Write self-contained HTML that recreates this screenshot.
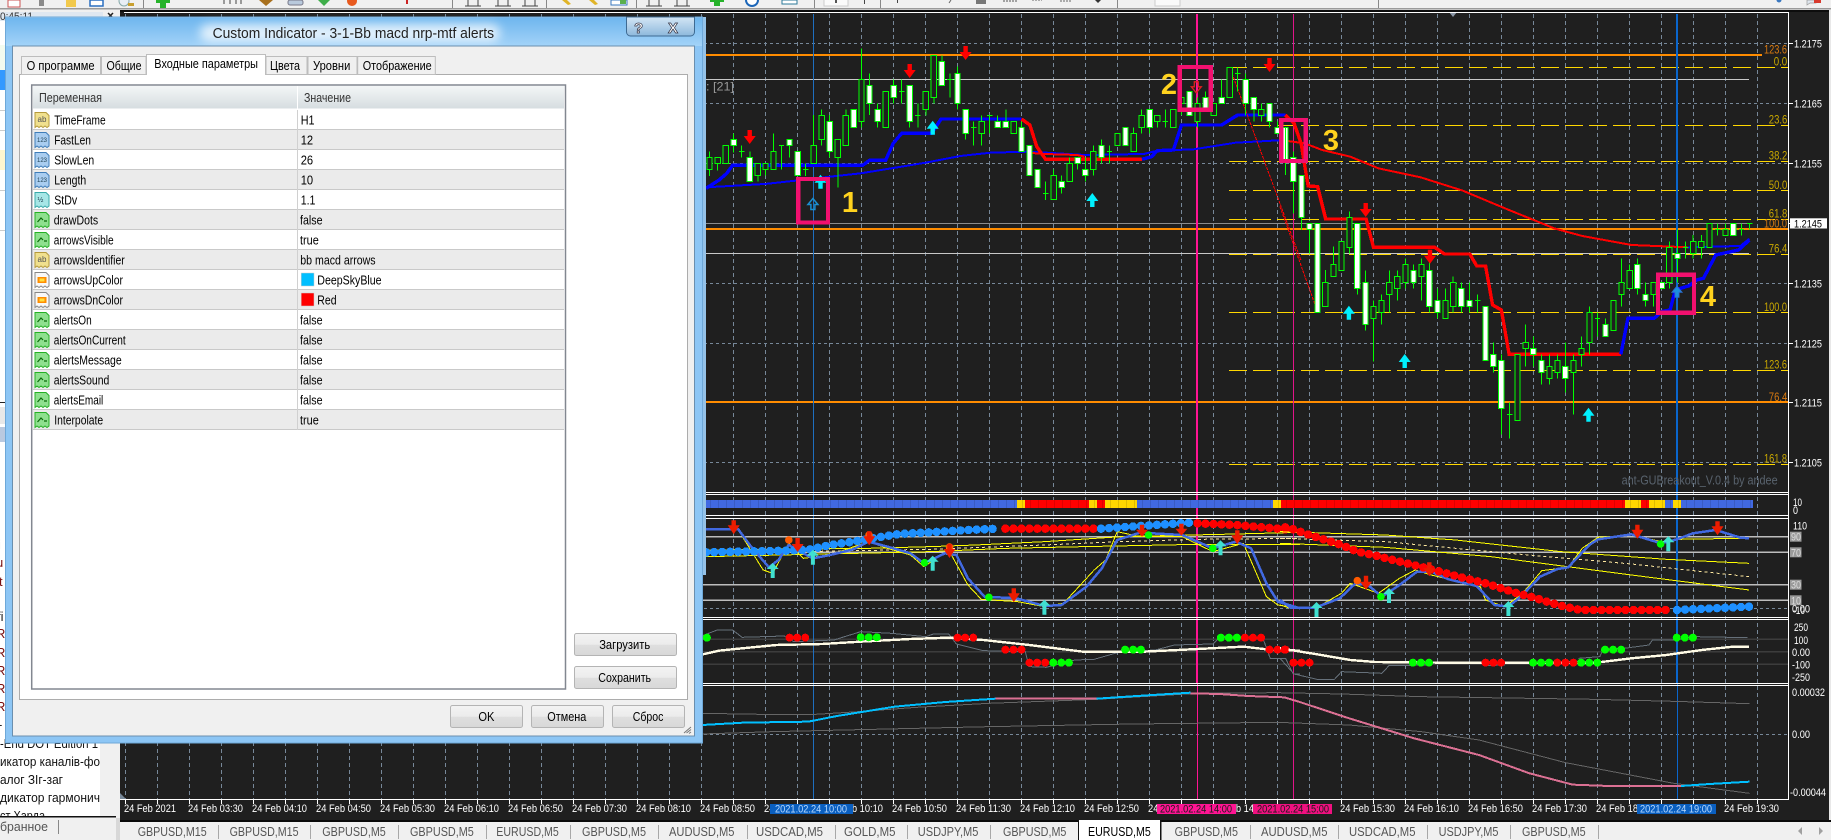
<!DOCTYPE html>
<html><head><meta charset="utf-8"><title>Custom Indicator</title>
<style>
html,body{margin:0;padding:0;background:#f0f0f0;overflow:hidden}
svg{display:block}
text{font-family:"Liberation Sans",sans-serif;white-space:pre}
path{vector-effect:non-scaling-stroke}
.n{fill:none}
.n path,path.n{shape-rendering:crispEdges}
.c path{shape-rendering:crispEdges}
.ax text{fill:#fff;font-size:11px}
.t text{fill:#000;font-size:13px}
.tb text{fill:#555;font-size:13px}
</style></head><body>
<svg xmlns="http://www.w3.org/2000/svg" width="1831" height="840" viewBox="0 0 1831 840">
<defs>
<pattern id="vg" x="125" y="14" width="32" height="7" patternUnits="userSpaceOnUse"><rect width="1" height="4" fill="#778899"/></pattern>
<pattern id="tk" x="125" y="799" width="32" height="5" patternUnits="userSpaceOnUse"><rect width="1" height="5" fill="#fff"/></pattern>
<linearGradient id="tit" x1="0" y1="0" x2="0" y2="1"><stop offset="0" stop-color="#6fb6ee"/><stop offset="1" stop-color="#a3d3f8"/></linearGradient>
<linearGradient id="hdr" x1="0" y1="0" x2="0" y2="1"><stop offset="0" stop-color="#f3f6f7"/><stop offset="1" stop-color="#d6dde0"/></linearGradient>
<linearGradient id="btn" x1="0" y1="0" x2="0" y2="1"><stop offset="0" stop-color="#f3f3f3"/><stop offset=".5" stop-color="#ececec"/><stop offset=".52" stop-color="#dfdfdf"/><stop offset="1" stop-color="#d8d8d8"/></linearGradient>
<linearGradient id="cb" x1="0" y1="0" x2="0" y2="1"><stop offset="0" stop-color="#d4e6f5"/><stop offset="1" stop-color="#8db8dc"/></linearGradient>
<filter id="bl" x="-20%" y="-60%" width="140%" height="220%"><feGaussianBlur stdDeviation="5"/></filter>
</defs>

<!-- window background -->
<rect width="1831" height="840" fill="#f0f0f0"/>
<rect x="0" y="8" width="1831" height="1.5" fill="#9a9a9a"/>

<!-- toolbar -->
<g>
<rect x="8" y="0" width="12" height="7" fill="#fff" stroke="#c55" stroke-width="1"/>
<rect x="39" y="0" width="5" height="6" fill="#8a8a8a"/>
<rect x="66" y="0" width="10" height="7" fill="#f2c94c"/>
<rect x="90" y="0" width="13" height="6" fill="#fff" stroke="#2a6fc0" stroke-width="1.5"/>
<circle cx="124" cy="1" r="5" fill="#e8eef5" stroke="#8aa" stroke-width="1"/><rect x="128" y="3" width="6" height="3" fill="#c9a030"/>
<rect x="143" y="0" width="1" height="8" fill="#888"/>
<rect x="160" y="0" width="6" height="8" fill="#27b32b"/><rect x="156" y="0" width="14" height="3" fill="#27b32b"/>
<path d="M224 0v4M230 0v4M236 0v4M241 0v4" stroke="#444" fill="none"/>
<path d="M259 0h14l-7 6z" fill="#a8701e"/>
<rect x="288" y="0" width="15" height="5" rx="2" fill="#b9c9dc" stroke="#778" stroke-width="1"/>
<path d="M318 0h12l-6 6z" fill="#3fae4a"/>
<circle cx="352" cy="1" r="5" fill="#e85a1e"/>
<rect x="406" y="0" width="2" height="4" fill="#c22"/>
<rect x="452" y="0" width="1" height="8" fill="#888"/>
<path d="M465 6h16M468 0v6M478 0v6M495 6h16M498 0v6M508 0v6M522 6h16M525 0v6M535 0v6" stroke="#444" fill="none"/>
<rect x="546" y="0" width="1" height="8" fill="#888"/>
<path d="M562 0l6 5 3-1-4-4zM589 0l6 5 3-1-4-4z" fill="#e0b428"/>
<rect x="611" y="0" width="16" height="5" fill="#fff" stroke="#3a78c0" stroke-width="1"/><rect x="620" y="0" width="6" height="4" fill="#5bb04f"/>
<rect x="636" y="0" width="1" height="8" fill="#888"/>
<path d="M646 6h16M649 0v6M659 0v6M674 6h16M677 0v6M687 0v6" stroke="#444" fill="none"/>
<rect x="714" y="0" width="6" height="6" fill="#27b32b"/><rect x="710" y="0" width="14" height="2" fill="#27b32b"/>
<circle cx="752" cy="0" r="6" fill="#fff" stroke="#1c66b8" stroke-width="2"/>
<rect x="782" y="0" width="15" height="4" fill="#fff" stroke="#2d7a9a" stroke-width="1"/>
<rect x="814" y="0" width="1" height="8" fill="#888"/>
<rect x="824" y="-1" width="24" height="7" fill="#fbfbfb" stroke="#ccc"/>
<rect x="835" y="0" width="2" height="3" fill="#555"/><rect x="864" y="0" width="1" height="4" fill="#444"/>
<rect x="880" y="0" width="1" height="8" fill="#888"/>
<rect x="897" y="0" width="1" height="3" fill="#444"/>
<path d="M949 3l2-3" stroke="#666" fill="none"/>
<rect x="976" y="0" width="10" height="4" fill="#777"/>
<path d="M1003 1h14" stroke="#555" stroke-dasharray="2 1" fill="none"/>
<path d="M1032 0h10M1060 1h12" stroke="#666" stroke-dasharray="2 1" fill="none"/>
<path d="M1095 0h6l-3 3z" fill="#333"/>
<rect x="1117" y="0" width="1" height="8" fill="#888"/>
<rect x="1155" y="-1" width="25" height="7" fill="#fafafa" stroke="#ccc"/>
<rect x="1378" y="0" width="1" height="8" fill="#888"/>
<circle cx="1779" cy="0" r="2.5" fill="#3a78c0"/>
<path d="M1807 0h9v3h-6l-3 2z" fill="#dfe6ee" stroke="#999" stroke-width=".7"/><rect x="1814" y="0" width="7" height="3" fill="#d83a2e"/>
</g>

<!-- chart background -->
<rect x="120" y="10" width="1711" height="811" fill="#1f1f1f"/>
<rect x="120" y="10" width="1711" height="2" fill="#0d0d0d"/>
<rect x="1829" y="10" width="2" height="811" fill="#e8e8e8"/>
<rect x="120" y="14" width="1640" height="785" fill="url(#vg)"/>
<rect x="125" y="799" width="1640" height="5" fill="url(#tk)"/>

<!-- horizontal grid -->
<path class="n" stroke="#778899" stroke-dasharray="3 3" d="M122 43.5H1788M122 103.5H1788M122 163.5H1788M122 283.5H1788M122 343.5H1788M122 402.5H1788M122 462.5H1788M122 608.5H1788M122 734.5H1788"/>
<!-- fib gold dashes -->
<path class="n" stroke="#ffd700" stroke-width="1.4" stroke-dasharray="18 6" d="M1229 67.5H1788M1229 125.5H1788M1229 161.5H1788M1229 190.5H1788M1229 219.5H1788M1229 254.5H1788M1229 312.5H1788M1229 370.5H1788M1229 464.5H1788"/>
<!-- solid levels -->
<path class="n" stroke="#c8c8c8" stroke-width="1.2" d="M120 79.5H1749M120 253.5H1749"/>
<path class="n" stroke="#8c8c8c" stroke-width="1.2" d="M120 223.5H1749"/>
<path class="n" stroke="#ff8c00" stroke-width="2" d="M120 55H1762M120 229H1788M120 402H1788"/>
<!-- panel 3 & 4 levels -->
<path class="n" stroke="#bdbdbd" stroke-width="1.2" d="M702 536.7H1788M702 552.3H1788M702 584.7H1788M702 600.3H1788"/>
<path class="n" stroke="#3c3c3c" stroke-width="1.2" d="M702 639.3H1788M702 651.7H1788M702 664.3H1788"/>

<!-- vertical markers -->
<rect x="813" y="14" width="1" height="785" fill="#1e6fc0"/>
<rect x="1196" y="14" width="2" height="669" fill="#ff1493"/>
<rect x="1197" y="683" width="1" height="116" fill="#ff1493"/>
<rect x="1293" y="14" width="1" height="785" fill="#e0148a"/>
<rect x="1676" y="14" width="2" height="669" fill="#0a66cc"/>
<rect x="1677" y="683" width="1" height="116" fill="#0a66cc"/>

<!-- supertrend and MA, left part -->
<g transform="translate(700,0) scale(.3827,.3333)" class="n">
<path stroke="#00f" stroke-width="2" d="M16 562L170 552 250 542 340 530 420 520 500 505 590 488 680 468 760 458 860 455 1005 465 1160 462 1195 452 1290 448 1400 428 1530 420"/>
<path stroke="#f00" stroke-width="2" d="M855 458L900 462 985 465 1005 470"/>
<path stroke="#00f" stroke-width="3.4" d="M16 565L50 540 70 520 85 496H425L443 481H485L505 430 527 400H605L630 357H840"/>
<path stroke="#f00" stroke-width="3.4" d="M840 357L862 375 880 440 903 478H1155"/>
<path stroke="#00f" stroke-width="3.4" d="M1155 478L1180 470 1195 452 1237 450 1258 375H1363L1405 345H1530"/>
<path stroke="#f00" stroke-width="1" stroke-dasharray="3 1" d="M1390 220L1570 780"/>
</g>
<g transform="translate(1280,0) scale(.3514,.3333)" class="n">
<path stroke="#f00" stroke-width="1" stroke-dasharray="3 1" d="M0 620L100 915"/>
<path stroke="#f00" stroke-width="2" d="M0 420L70 430 120 450 200 470 280 505 400 532 520 572 640 625 780 685 860 708 1000 735 1160 742"/>
<path stroke="#00f" stroke-width="2" d="M1160 742L1310 738 1336 716"/>
<path stroke="#f00" stroke-width="3.4" d="M15 345L40 370 60 430 80 558 107 560 130 657H245L266 742H440L468 762H540L560 798H585L605 915 630 930 652 1063H970"/>
<path stroke="#00f" stroke-width="3.4" d="M970 1063L990 955H1065L1085 935 1110 930 1125 870 1165 857 1185 840 1205 835 1240 765 1305 750 1336 720"/>
</g>

<!-- candles left -->
<g transform="translate(700,0) scale(.3827,.3333)" class="c">
<path class="n" stroke="#0f0" d="M25 455V528M46 472V512M67 436V490M88 400V458M109 436V472M130 455V545M151 490V545M171 490V526M192 400V508M213 436V508M234 418V472M255 454V528M276 490V528M297 345V490M318 328V436M339 345V472M360 418V562M381 328V436M402 328V382M422 145V382M443 220V345M464 310V382M485 274V382M506 238V310M527 238V310M548 256V382M569 310V382M590 274V346M611 167V310M632 167V256M653 220V292M673 200V328M694 328V418M715 364V436M736 346V436M757 346V400M778 346V382M799 328V382M820 364V400M840 364V456M861 436V526M882 508V562M903 544V600M924 508V598M945 526V580M966 472V544M987 472V508M1007 472V545M1028 436V526M1049 418V490M1070 436V490M1091 400V436M1112 382V436M1133 382V454M1154 328V400M1175 328V400M1195 346V382M1216 328V382M1237 328V382M1258 292V345M1279 274V346M1300 292V382M1321 274V328M1342 310V346M1363 238V310M1384 202V292M1405 202V274M1426 220V346M1447 292V364M1467 310V364M1488 310V382M1509 364V400M1530 382V510"/>
<path class="n" stroke="#0f0" d="M109 454m-7 0h14M213 436m-7 0h14M276 508m-7 0h14M527 274m-7 0h14M569 346m-7 0h14M653 238m-7 0h14M715 382m-7 0h14M757 346m-7 0h14M903 580m-7 0h14M1070 454m-7 0h14M1216 364m-7 0h14M1405 220m-7 0h14"/>
<path fill="#1f1f1f" stroke="#0f0" d="M25 472m-7 0h14V508h-14zM46 472m-7 0h14V490h-14zM67 436m-7 0h14V490h-14zM151 490m-7 0h14V526h-14zM171 490m-7 0h14V508h-14zM192 454m-7 0h14V508h-14zM297 436m-7 0h14V490h-14zM318 346m-7 0h14V418h-14zM360 418m-7 0h14V472h-14zM381 346m-7 0h14V436h-14zM422 238m-7 0h14V364h-14zM485 274m-7 0h14V382h-14zM590 274m-7 0h14V328h-14zM611 167m-7 0h14V292h-14zM736 364m-7 0h14V400h-14zM820 364m-7 0h14V400h-14zM924 526m-7 0h14V598h-14zM966 490m-7 0h14V544h-14zM1028 454m-7 0h14V508h-14zM1091 400m-7 0h14V436h-14zM1133 400m-7 0h14V454h-14zM1154 346m-7 0h14V382h-14zM1195 346m-7 0h14V364h-14zM1237 328m-7 0h14V382h-14zM1258 292m-7 0h14V310h-14zM1300 310m-7 0h14V364h-14zM1342 310m-7 0h14V346h-14zM1384 202m-7 0h14V292h-14zM1467 328m-7 0h14V346h-14z"/>
<path fill="#fff" stroke="#0f0" d="M88 418m-7 0h14V436h-14zM130 472m-7 0h14V544h-14zM234 418m-7 0h14V436h-14zM255 454m-7 0h14V526h-14zM339 364m-7 0h14V454h-14zM402 328m-7 0h14V382h-14zM443 256m-7 0h14V310h-14zM464 328m-7 0h14V364h-14zM506 256m-7 0h14V292h-14zM548 256m-7 0h14V364h-14zM632 184m-7 0h14V256h-14zM673 220m-7 0h14V310h-14zM694 328m-7 0h14V400h-14zM778 364m-7 0h14V382h-14zM799 364m-7 0h14V382h-14zM840 382m-7 0h14V454h-14zM861 436m-7 0h14V526h-14zM882 508m-7 0h14V562h-14zM945 544m-7 0h14V562h-14zM987 472m-7 0h14V490h-14zM1007 508m-7 0h14V526h-14zM1049 436m-7 0h14V472h-14zM1112 382m-7 0h14V436h-14zM1175 328m-7 0h14V382h-14zM1279 274m-7 0h14V346h-14zM1321 292m-7 0h14V328h-14zM1363 292m-7 0h14V310h-14zM1426 238m-7 0h14V310h-14zM1447 292m-7 0h14V328h-14zM1488 310m-7 0h14V364h-14zM1509 382m-7 0h14V400h-14zM1530 382m-7 0h14V482h-14z"/>
</g>
<!-- candles right -->
<g transform="translate(1280,0) scale(.3514,.3333)" class="c">
<path class="n" stroke="#0f0" d="M15 382V525M38 454V640M61 526V690M84 670V760M107 670V937M129 810V919M152 740V830M175 724V811M198 634V760M220 670V884M243 811V991M266 901V1085M289 883V973M311 811V937M334 811V901M357 775V865M380 793V865M403 775V901M425 780V937M448 865V955M471 865V955M493 829V937M516 847V937M539 847V937M562 883V937M585 919V1081M607 1027V1117M630 1063V1303M653 1207V1315M676 1063V1261M699 973V1099M721 1009V1099M744 1063V1153M767 1063V1153M790 1063V1135M812 1027V1177M835 1063V1243M858 1009V1099M881 919V1063M903 937V1009M926 955V1009M949 901V991M972 775V919M995 793V865M1017 775V883M1040 847V919M1063 847V919M1086 847V865M1108 724V865M1131 688V847M1154 724V775M1176 705V775M1199 705V775M1222 670V742M1245 670V706M1268 670V706M1290 670V706M1313 670V706M1336 670V688"/>
<path class="n" stroke="#0f0" d="M562 901m-7 0h15M653 1243m-7 0h15M903 955m-7 0h15M1154 742m-7 0h15M1245 688m-7 0h15M1313 688m-7 0h15M1336 670m-7 0h15"/>
<path fill="#1f1f1f" stroke="#0f0" d="M129 847m-7.500 0h15V919h-15zM152 793m-7.500 0h15V829h-15zM175 725m-7.500 0h15V811h-15zM198 652m-7.500 0h15V742h-15zM266 919m-7.500 0h15V955h-15zM289 901m-7.500 0h15V937h-15zM311 847m-7.500 0h15V883h-15zM334 829m-7.500 0h15V865h-15zM357 793m-7.500 0h15V847h-15zM403 793m-7.500 0h15V829h-15zM471 901m-7.500 0h15V955h-15zM493 847m-7.500 0h15V919h-15zM676 1063m-7.500 0h15V1261h-15zM699 1027m-7.500 0h15V1045h-15zM767 1099m-7.500 0h15V1135h-15zM790 1081m-7.500 0h15V1117h-15zM835 1081m-7.500 0h15V1117h-15zM858 1045m-7.500 0h15V1063h-15zM881 937m-7.500 0h15V1027h-15zM949 901m-7.500 0h15V991h-15zM972 847m-7.500 0h15V883h-15zM995 811m-7.500 0h15V865h-15zM1063 847m-7.500 0h15V883h-15zM1108 742m-7.500 0h15V847h-15zM1176 724m-7.500 0h15V760h-15zM1199 724m-7.500 0h15V742h-15zM1222 670m-7.500 0h15V742h-15zM1268 688m-7.500 0h15V706h-15z"/>
<path fill="#fff" stroke="#0f0" d="M38 472m-7.500 0h15V544h-15zM61 526m-7.500 0h15V652h-15zM84 670m-7.500 0h15V688h-15zM107 670m-7.500 0h15V937h-15zM220 670m-7.500 0h15V865h-15zM243 847m-7.500 0h15V973h-15zM380 811m-7.500 0h15V847h-15zM425 811m-7.500 0h15V919h-15zM448 901m-7.500 0h15V937h-15zM516 865m-7.500 0h15V919h-15zM539 901m-7.500 0h15V919h-15zM585 919m-7.500 0h15V1081h-15zM607 1063m-7.500 0h15V1099h-15zM630 1081m-7.500 0h15V1225h-15zM721 1045m-7.500 0h15V1063h-15zM744 1081m-7.500 0h15V1117h-15zM812 1099m-7.500 0h15V1135h-15zM926 973m-7.500 0h15V1009h-15zM1017 793m-7.500 0h15V865h-15zM1040 883m-7.500 0h15V901h-15zM1086 847m-7.500 0h15V865h-15zM1131 760m-7.500 0h15V775h-15zM1290 670m-7.500 0h15V706h-15z"/>
</g>

<!-- arrows main -->
<g fill="#f00">
<path transform="translate(749.700,137)" d="M-2.200-7H2.200V-1H6L0 7-6-1H-2.200Z"/>
<path transform="translate(909.700,71)" d="M-2.200-7H2.200V-1H6L0 7-6-1H-2.200Z"/>
<path transform="translate(965.600,53)" d="M-2.200-7H2.200V-1H6L0 7-6-1H-2.200Z"/>
<path transform="translate(1269.500,65)" d="M-2.200-7H2.200V-1H6L0 7-6-1H-2.200Z"/>
<path transform="translate(1365.700,210)" d="M-2.200-7H2.200V-1H6L0 7-6-1H-2.200Z"/>
<path transform="translate(1430,256.700)" d="M-2.200-7H2.200V-1H6L0 7-6-1H-2.200Z"/>
</g>
<g fill="#00f0ff">
<path transform="translate(820.500,181.700)" d="M0-7L6 1H2.200V7H-2.200V1H-6Z"/>
<path transform="translate(932.700,127.700)" d="M0-7L6 1H2.200V7H-2.200V1H-6Z"/>
<path transform="translate(1092.300,200)" d="M0-7L6 1H2.200V7H-2.200V1H-6Z"/>
<path transform="translate(1348.900,312.700)" d="M0-7L6 1H2.200V7H-2.200V1H-6Z"/>
<path transform="translate(1404.700,361)" d="M0-7L6 1H2.200V7H-2.200V1H-6Z"/>
<path transform="translate(1588.500,414.700)" d="M0-7L6 1H2.200V7H-2.200V1H-6Z"/>
</g>
<path transform="translate(812.900,204)" fill="none" stroke="#1a8fd0" stroke-width="1.500" d="M0-5.500L5 0.500H2V5.500H-2V.5H-5Z"/>
<path transform="translate(1196.300,87.300)" fill="none" stroke="#e02020" stroke-width="1.300" d="M-2-5.500H2V-.5H5L0 5.500-5-.5H-2Z"/>
<path transform="translate(1677,291.700)" fill="#1a8fe0" stroke="#2a6fd0" d="M0-5.500L5 0.500H2V5.500H-2V.5H-5Z"/>

<!-- pink boxes -->
<g fill="none" stroke="#f2106f" stroke-width="4.400" shape-rendering="crispEdges">
<rect x="798.400" y="179" width="29.600" height="43.500"/>
<rect x="1179.600" y="67" width="31.200" height="42.600"/>
<rect x="1281.200" y="120" width="24.400" height="41"/>
<rect x="1658" y="274.700" width="36" height="38"/>
</g>
<g fill="#ffd21e" font-size="29" font-weight="bold" text-anchor="middle" style="font-family:'Liberation Sans',sans-serif">
<text x="850" y="212">1</text><text x="1169" y="94">2</text><text x="1331" y="150">3</text><text x="1708" y="306">4</text>
</g>
<text x="706" y="90.500" font-size="12" fill="#9a9a9a" textLength="28" lengthAdjust="spacingAndGlyphs">: [21]</text>
<text x="1621.600" y="484.500" font-size="13" fill="#59636e" textLength="156" lengthAdjust="spacingAndGlyphs">ant-GUBreakout_V.0.4 by andee</text>
<path d="M1449 12h8l-4 5z" fill="#8a96a6"/>
<path d="M120 793v6h6z" fill="#778899"/>

<!-- colour strip -->
<rect x="702" y="500" width="315" height="8" fill="#4169e1"/>
<rect x="1017" y="500" width="8" height="8" fill="#ffd700"/>
<rect x="1025" y="500" width="64" height="8" fill="#f00"/>
<rect x="1089" y="500" width="8" height="8" fill="#ffd700"/>
<rect x="1097" y="500" width="8" height="8" fill="#f00"/>
<rect x="1105" y="500" width="32" height="8" fill="#ffd700"/>
<rect x="1137" y="500" width="136" height="8" fill="#4169e1"/>
<rect x="1273" y="500" width="8" height="8" fill="#ffd700"/>
<rect x="1281" y="500" width="344" height="8" fill="#f00"/>
<rect x="1625" y="500" width="16" height="8" fill="#ffd700"/>
<rect x="1641" y="500" width="8" height="8" fill="#f00"/>
<rect x="1649" y="500" width="16" height="8" fill="#ffd700"/>
<rect x="1665" y="500" width="8" height="8" fill="#4169e1"/>
<rect x="1673" y="500" width="8" height="8" fill="#ffd700"/>
<rect x="1681" y="500" width="72" height="8" fill="#4169e1"/>
<path class="n" stroke="#000" stroke-opacity=".12" stroke-width="8" stroke-dasharray="1 7" d="M702 504H1753"/>

<!-- panel 3 lines left -->
<g transform="translate(700,490) scale(.3827,.3333)" class="n">
<path stroke="#ffff00" d="M16 180L440 175 600 170 720 165 900 155 1100 140 1400 132 1568 127"/>
<path stroke="#ffff00" d="M16 200L600 185 800 175 1000 170 1300 163 1568 163"/>
<path stroke="#ffe9a0" stroke-dasharray="3 3" d="M16 190L600 178 900 165 1100 155 1300 148 1568 145"/>
<path stroke="#ffff00" d="M16 120H100L165 240 190 250 232 160 270 205 340 195 440 155 490 175 550 195 585 230 650 180 700 285 735 328 830 335 900 350 950 340 990 290 1030 240 1060 210 1090 125 1150 140 1260 140 1340 185 1420 160 1480 320 1510 345 1568 355"/>
<path stroke="#4169e1" stroke-width="2.500" d="M16 118H100L130 165 180 232 205 210 232 165 270 190 295 205 340 195 400 178 440 155 490 170 550 190 585 220 640 190 670 195 700 265 745 322 820 323 900 348 945 345 1010 290 1050 235 1090 150 1150 128 1260 135 1340 175 1400 155 1440 175 1480 280 1510 335 1568 355"/>
<path stroke="#1e90ff" stroke-width="8.500" stroke-linecap="round" stroke-dasharray="0 8" d="M16 187L230 182 290 178 340 165 400 155 460 143 520 132 600 127 700 120 780 116"/>
<path stroke="#f00" stroke-width="8.500" stroke-linecap="round" stroke-dasharray="0 8" d="M798 116H1040"/>
<path stroke="#1e90ff" stroke-width="8.500" stroke-linecap="round" stroke-dasharray="0 8" d="M1048 116L1150 108 1280 98"/>
<path stroke="#f00" stroke-width="8.500" stroke-linecap="round" stroke-dasharray="0 8" d="M1300 100L1400 105 1500 115 1550 120"/>
</g>
<g transform="translate(1280,490) scale(.3514,.3333)" class="n">
<path stroke="#ffff00" d="M0 125L300 135 500 150 800 185 1100 208 1335 220"/>
<path stroke="#ffff00" d="M0 160L300 172 600 200 1000 255 1335 300"/>
<path stroke="#ffe9a0" stroke-dasharray="3 3" d="M0 145L300 155 600 185 1000 222 1335 260"/>
<path stroke="#ffff00" d="M0 345L30 355H100L175 310 200 280 280 310 340 265 385 240 430 255 570 290 585 330 640 350 690 310 745 242 820 232 860 175 905 142 1000 135 1085 155 1130 148 1310 145H1335"/>
<path stroke="#4169e1" stroke-width="2.500" d="M0 330L30 353H100L170 325 215 280 250 285 290 320 340 285 390 245 430 245 480 268 560 288 610 345 650 350 690 315 740 260 790 237 820 232 880 165 905 148 1000 133 1085 160 1130 148 1175 130 1240 120 1310 143 1335 145"/>
<path stroke="#f00" stroke-width="8.500" stroke-linecap="round" stroke-dasharray="0 8" d="M15 112L38 118 84 135 130 150 175 165 220 185 265 195 310 207 380 225 445 242 515 262 585 280 630 295 675 310 720 322 765 337 810 350 855 360H1105"/>
<path stroke="#1e90ff" stroke-width="8.500" stroke-linecap="round" stroke-dasharray="0 8" d="M1130 360L1335 350"/>
</g>

<!-- panel 3 markers -->
<g fill="#00ff00">
<circle cx="924.600" cy="562.700" r="3.800"/><circle cx="988.900" cy="597.300" r="3.800"/><circle cx="1148.500" cy="535" r="3.800"/><circle cx="1212.800" cy="548.300" r="3.800"/><circle cx="1380.900" cy="596.700" r="3.800"/><circle cx="1660.600" cy="544" r="3.800"/>
</g>
<g fill="#ff5a00">
<circle cx="788.800" cy="540" r="3.800"/><circle cx="869" cy="535" r="3.800"/><circle cx="949.500" cy="547" r="3.800"/><circle cx="1357.300" cy="580.700" r="3.800"/>
</g>
<g fill="#ec1c00">
<path transform="translate(733.700,527.300)" d="M-2.200-7H2.200V-2H6L0 7-6-2H-2.200Z"/>
<path transform="translate(797.600,545)" d="M-2.200-7H2.200V-1H6L0 7-6-1H-2.200Z"/>
<path transform="translate(869.200,538.300)" d="M-2.200-7H2.200V-2H6L0 7-6-2H-2.200Z"/>
<path transform="translate(949.500,551)" d="M-2.200-7H2.200V-2H6L0 7-6-2H-2.200Z"/>
<path transform="translate(1013.800,595.300)" d="M-2.200-7H2.200V-2H6L0 7-6-2H-2.200Z"/>
<path transform="translate(1142,531.700)" d="M-2.200-7H2.200V-2H6L0 5-6-2H-2.200Z"/>
<path transform="translate(1181.400,530.700)" d="M-2.200-7H2.200V-2H6L0 5-6-2H-2.200Z"/>
<path transform="translate(1237.300,537.300)" d="M-2.200-7H2.200V-2H6L0 7-6-2H-2.200Z"/>
<path transform="translate(1366,582.700)" d="M-2.200-7H2.200V-1H6L0 7-6-1H-2.200Z"/>
<path transform="translate(1429.300,569.300)" d="M-2.200-7H2.200V-1H6L0 7-6-1H-2.200Z"/>
<path transform="translate(1637.400,531.700)" d="M-2.200-7H2.200V-2H6L0 7-6-2H-2.200Z"/>
<path transform="translate(1717.500,528.300)" d="M-2.200-7H2.200V-2H6L0 7-6-2H-2.200Z"/>
</g>
<g fill="#40e0d0">
<path transform="translate(772.700,570)" d="M0-7L6-1H2V8H-2V-1H-6Z"/>
<path transform="translate(812.900,556.700)" d="M0-7L6-1H2V8H-2V-1H-6Z"/>
<path transform="translate(932.700,562.700)" d="M0-7L6-1H2V8H-2V-1H-6Z"/>
<path transform="translate(1044.400,606.700)" d="M0-7L6-1H2V8H-2V-1H-6Z"/>
<path transform="translate(1220.500,547.300)" d="M0-7L6-1H2V8H-2V-1H-6Z"/>
<path transform="translate(1316.500,609)" d="M0-7L6-1H2V8H-2V-1H-6Z"/>
<path transform="translate(1389,595)" d="M0-7L6-1H2V8H-2V-1H-6Z"/>
<path transform="translate(1508.400,608)" d="M0-7L6-1H2V8H-2V-1H-6Z"/>
<path transform="translate(1668.300,543.300)" d="M0-7L6-1H2V8H-2V-1H-6Z"/>
</g>

<!-- panel 4 -->
<g transform="translate(700,490) scale(.3827,.3333)" class="n">
<path stroke="#66707a" d="M0 440L45 420H85L110 442 220 438 245 455 350 450 420 425 500 430 590 440 610 432H650L670 462 740 482 850 485 860 530 905 532 980 510 1030 508 1100 485 1190 480 1240 465 1340 462 1360 440 1470 442 1490 505H1530L1550 552H1568"/>
<path stroke="#fffbe6" stroke-width="2.400" d="M0 495L50 482 110 475 200 465 320 462 420 455 550 447 650 443 740 450 860 465 1000 485H1160L1250 480 1420 470 1480 478 1568 482"/>
<path stroke="#00ff00" stroke-width="8" stroke-linecap="round" d="M18 443h0M420 442h0M441 442h0M462 442h0M923 518h0M944 518h0M964 518h0M1111 479h0M1132 479h0M1152 479h0M1361 443h0M1382 443h0M1403 443h0"/>
<path stroke="#f00" stroke-width="8" stroke-linecap="round" d="M234 443h0M254 443h0M275 443h0M673 443h0M693 443h0M714 443h0M798 479h0M819 479h0M840 479h0M861 518h0M881 518h0M902 518h0M1424 443h0M1445 443h0M1466 443h0M1488 479h0M1509 479h0M1530 479h0M1551 518h0"/>
</g>
<g transform="translate(1280,490) scale(.3514,.3333)" class="n">
<path stroke="#66707a" d="M0 505L40 552 105 568H155L175 545 290 550 310 527 420 525M580 527L640 525M850 505L910 500 920 478 980 475 1050 465 1060 450H1120L1180 440 1330 443"/>
<path stroke="#fffbe6" stroke-width="2.400" d="M0 475L100 492 200 510 270 516 470 518H900L1000 505 1100 495 1200 480 1290 470H1335"/>
<path stroke="#00ff00" stroke-width="8" stroke-linecap="round" d="M378 518h0M401 518h0M424 518h0M720 518h0M743 518h0M766 518h0M857 518h0M880 518h0M903 518h0M925 479h0M948 479h0M971 479h0M1129 443h0M1152 443h0M1175 443h0"/>
<path stroke="#f00" stroke-width="8" stroke-linecap="round" d="M13 479h0M38 518h0M61 518h0M84 518h0M585 518h0M607 518h0M629 518h0M789 518h0M812 518h0M835 518h0"/>
</g>

<!-- panel 5 -->
<g transform="translate(700,680) scale(.7213,.3333)" class="n">
<path stroke="#666" stroke-width="1" d="M3 100L85 103H160L220 95 300 82 400 70 550 58 690 40 800 38 890 42 1000 50 1240 58 1350 64 1455 71"/>
<path stroke="#666" stroke-width="1" d="M3 162L100 155 200 150 400 140 600 132 800 127 900 135 1000 155 1080 180 1200 248 1350 310 1455 340"/>
<path stroke="#00bfff" stroke-width="2" d="M3 135L60 128 150 125 190 108 270 80 340 66 410 56"/>
<path stroke="#db7093" stroke-width="2" d="M410 56H550"/>
<path stroke="#00bfff" stroke-width="2" d="M550 56L620 46 680 38"/>
<path stroke="#db7093" stroke-width="2" d="M680 40L720 42 760 48 810 52 830 65 900 115 990 175 1080 225 1150 280 1210 314 1260 318H1360"/>
<path stroke="#00bfff" stroke-width="2" d="M1360 318L1400 312 1455 305"/>
</g>

<!-- white separators and borders -->
<g fill="#fff">
<rect x="124" y="12" width="1665" height="1"/>
<rect x="120" y="492" width="1669" height="1"/><rect x="120" y="494" width="1669" height="1"/>
<rect x="120" y="515" width="1669" height="1"/><rect x="120" y="518" width="1669" height="1"/>
<rect x="120" y="617" width="1669" height="1"/><rect x="120" y="619" width="1669" height="1"/>
<rect x="120" y="683" width="1669" height="1"/><rect x="120" y="685" width="1669" height="1"/>
<rect x="120" y="799" width="1669" height="1"/>
<rect x="1788" y="12" width="1" height="788"/>
</g>
<path class="n" stroke="#fff" d="M1788 43.500h5M1788 103.500h5M1788 163.500h5M1788 223.500h5M1788 283.500h5M1788 343.500h5M1788 402.500h5M1788 462.500h5"/>

<!-- fib labels -->
<g font-size="11.500">
<text x="1764" y="53.500" fill="#d97a10" textLength="23" lengthAdjust="spacingAndGlyphs">123.6</text>
<text x="1773.700" y="65.500" fill="#c9a800" textLength="13.500" lengthAdjust="spacingAndGlyphs">0.0</text>
<text x="1768.800" y="123.500" fill="#c9a800" textLength="18.500" lengthAdjust="spacingAndGlyphs">23.6</text>
<text x="1768.800" y="159.500" fill="#c9a800" textLength="18.500" lengthAdjust="spacingAndGlyphs">38.2</text>
<text x="1768.800" y="189" fill="#c9a800" textLength="18.500" lengthAdjust="spacingAndGlyphs">50.0</text>
<text x="1768.800" y="217.500" fill="#c9a800" textLength="18.500" lengthAdjust="spacingAndGlyphs">61.8</text>
<text x="1764" y="227.500" fill="#d97a10" textLength="23" lengthAdjust="spacingAndGlyphs">100.0</text>
<text x="1768.800" y="252.500" fill="#c9a800" textLength="18.500" lengthAdjust="spacingAndGlyphs">76.4</text>
<text x="1764" y="311" fill="#c9a800" textLength="23" lengthAdjust="spacingAndGlyphs">100.0</text>
<text x="1764" y="368.500" fill="#c9a800" textLength="23" lengthAdjust="spacingAndGlyphs">123.6</text>
<text x="1768.800" y="401" fill="#d97a10" textLength="18.500" lengthAdjust="spacingAndGlyphs">76.4</text>
<text x="1764" y="462.500" fill="#c9a800" textLength="23" lengthAdjust="spacingAndGlyphs">161.8</text>
</g>

<!-- price axis -->
<rect x="1790" y="218.300" width="37" height="10.200" fill="#fff"/>
<rect x="1790" y="531.700" width="11.500" height="10" fill="#9a9a9a"/>
<rect x="1790" y="547.300" width="11.500" height="10" fill="#9a9a9a"/>
<rect x="1790" y="579.700" width="11.500" height="10" fill="#9a9a9a"/>
<rect x="1790" y="595.300" width="11.500" height="10" fill="#9a9a9a"/>
<g class="ax">
<text x="1794" y="47.500" textLength="28" lengthAdjust="spacingAndGlyphs">1.2175</text>
<text x="1794" y="107.500" textLength="28" lengthAdjust="spacingAndGlyphs">1.2165</text>
<text x="1794" y="167.500" textLength="28" lengthAdjust="spacingAndGlyphs">1.2155</text>
<text x="1794" y="227.500" textLength="28" lengthAdjust="spacingAndGlyphs" style="fill:#000">1.2145</text>
<text x="1794" y="287.500" textLength="28" lengthAdjust="spacingAndGlyphs">1.2135</text>
<text x="1794" y="347.500" textLength="28" lengthAdjust="spacingAndGlyphs">1.2125</text>
<text x="1794" y="406.500" textLength="28" lengthAdjust="spacingAndGlyphs">1.2115</text>
<text x="1794" y="466.500" textLength="28" lengthAdjust="spacingAndGlyphs">1.2105</text>
<text x="1793" y="506" textLength="9" lengthAdjust="spacingAndGlyphs">10</text>
<text x="1793" y="514" textLength="5" lengthAdjust="spacingAndGlyphs">0</text>
<text x="1793" y="529.500" textLength="14" lengthAdjust="spacingAndGlyphs">110</text>
<text x="1791" y="540.700" textLength="10" lengthAdjust="spacingAndGlyphs" style="fill:#ddd">90</text>
<text x="1791" y="556.300" textLength="10" lengthAdjust="spacingAndGlyphs" style="fill:#ddd">70</text>
<text x="1791" y="588.700" textLength="10" lengthAdjust="spacingAndGlyphs" style="fill:#ddd">30</text>
<text x="1791" y="604.300" textLength="10" lengthAdjust="spacingAndGlyphs" style="fill:#ddd">10</text>
<text x="1792" y="612.500" textLength="18" lengthAdjust="spacingAndGlyphs">0.00</text>
<text x="1793" y="614" textLength="12" lengthAdjust="spacingAndGlyphs">-10</text>
<text x="1794" y="631" textLength="14" lengthAdjust="spacingAndGlyphs">250</text>
<text x="1794" y="644" textLength="14" lengthAdjust="spacingAndGlyphs">100</text>
<text x="1792" y="656" textLength="18" lengthAdjust="spacingAndGlyphs">0.00</text>
<text x="1792" y="668.500" textLength="18" lengthAdjust="spacingAndGlyphs">-100</text>
<text x="1792" y="681" textLength="18" lengthAdjust="spacingAndGlyphs">-250</text>
<text x="1792" y="696" textLength="33" lengthAdjust="spacingAndGlyphs">0.00032</text>
<text x="1792" y="738" textLength="18" lengthAdjust="spacingAndGlyphs">0.00</text>
<text x="1790" y="796" textLength="36" lengthAdjust="spacingAndGlyphs">-0.00044</text>
</g>

<!-- time axis -->
<g class="ax">
<text x="124" y="812" textLength="52" lengthAdjust="spacingAndGlyphs">24 Feb 2021</text>
<text x="188" y="812" textLength="55" lengthAdjust="spacingAndGlyphs">24 Feb 03:30</text>
<text x="252" y="812" textLength="55" lengthAdjust="spacingAndGlyphs">24 Feb 04:10</text>
<text x="316" y="812" textLength="55" lengthAdjust="spacingAndGlyphs">24 Feb 04:50</text>
<text x="380" y="812" textLength="55" lengthAdjust="spacingAndGlyphs">24 Feb 05:30</text>
<text x="444" y="812" textLength="55" lengthAdjust="spacingAndGlyphs">24 Feb 06:10</text>
<text x="508" y="812" textLength="55" lengthAdjust="spacingAndGlyphs">24 Feb 06:50</text>
<text x="572" y="812" textLength="55" lengthAdjust="spacingAndGlyphs">24 Feb 07:30</text>
<text x="636" y="812" textLength="55" lengthAdjust="spacingAndGlyphs">24 Feb 08:10</text>
<text x="700" y="812" textLength="55" lengthAdjust="spacingAndGlyphs">24 Feb 08:50</text>
<text x="764" y="812" textLength="55" lengthAdjust="spacingAndGlyphs">24 Feb 09:30</text>
<text x="828" y="812" textLength="55" lengthAdjust="spacingAndGlyphs">24 Feb 10:10</text>
<text x="892" y="812" textLength="55" lengthAdjust="spacingAndGlyphs">24 Feb 10:50</text>
<text x="956" y="812" textLength="55" lengthAdjust="spacingAndGlyphs">24 Feb 11:30</text>
<text x="1020" y="812" textLength="55" lengthAdjust="spacingAndGlyphs">24 Feb 12:10</text>
<text x="1084" y="812" textLength="55" lengthAdjust="spacingAndGlyphs">24 Feb 12:50</text>
<text x="1148" y="812" textLength="55" lengthAdjust="spacingAndGlyphs">24 Feb 13:30</text>
<text x="1212" y="812" textLength="55" lengthAdjust="spacingAndGlyphs">24 Feb 14:10</text>
<text x="1340" y="812" textLength="55" lengthAdjust="spacingAndGlyphs">24 Feb 15:30</text>
<text x="1404" y="812" textLength="55" lengthAdjust="spacingAndGlyphs">24 Feb 16:10</text>
<text x="1468" y="812" textLength="55" lengthAdjust="spacingAndGlyphs">24 Feb 16:50</text>
<text x="1532" y="812" textLength="55" lengthAdjust="spacingAndGlyphs">24 Feb 17:30</text>
<text x="1596" y="812" textLength="55" lengthAdjust="spacingAndGlyphs">24 Feb 18:10</text>
<text x="1724" y="812" textLength="55" lengthAdjust="spacingAndGlyphs">24 Feb 19:30</text>
</g>
<rect x="770" y="804" width="83" height="10" fill="#0a5fc0"/>
<rect x="1157" y="804" width="79" height="10" fill="#ff1493"/>
<rect x="1253" y="804" width="79" height="10" fill="#f01080"/>
<rect x="1637" y="804" width="79" height="10" fill="#0a5fc0"/>
<g font-size="11">
<text x="775" y="812.500" fill="#b5d8ff" textLength="72" lengthAdjust="spacingAndGlyphs">2021.02.24 10:00</text>
<text x="1160" y="812.500" fill="#1a1a1a" textLength="72" lengthAdjust="spacingAndGlyphs">2021.02.24 14:00</text>
<text x="1257" y="812.500" fill="#1a1a1a" textLength="72" lengthAdjust="spacingAndGlyphs">2021.02.24 15:00</text>
<text x="1640" y="812.500" fill="#b5d8ff" textLength="72" lengthAdjust="spacingAndGlyphs">2021.02.24 19:00</text>
</g>

<!-- tab bar -->
<rect x="118" y="820" width="1713" height="20" fill="#f0f0f0"/>
<rect x="118" y="820" width="1713" height="2" fill="#0a0a0a"/>
<rect x="1079" y="820" width="81" height="20" fill="#fff"/>
<rect x="1078" y="820" width="1" height="20" fill="#111"/>
<rect x="1160" y="820" width="1.500" height="20" fill="#111"/>
<rect x="1079" y="820" width="81" height="1" fill="#fff"/>
<g fill="#a8a8a8">
<rect x="218" y="825" width="1" height="14"/><rect x="310" y="825" width="1" height="14"/><rect x="398" y="825" width="1" height="14"/><rect x="486" y="825" width="1" height="14"/><rect x="570" y="825" width="1" height="14"/><rect x="658" y="825" width="1" height="14"/><rect x="747" y="825" width="1" height="14"/><rect x="835" y="825" width="1" height="14"/><rect x="907" y="825" width="1" height="14"/><rect x="990" y="825" width="1" height="14"/><rect x="1250" y="825" width="1" height="14"/><rect x="1338" y="825" width="1" height="14"/><rect x="1427" y="825" width="1" height="14"/><rect x="1510" y="825" width="1" height="14"/><rect x="1598" y="825" width="1" height="14"/>
</g>
<g class="tb">
<text x="137.700" y="836" textLength="69" lengthAdjust="spacingAndGlyphs">GBPUSD,M15</text>
<text x="229.600" y="836" textLength="69" lengthAdjust="spacingAndGlyphs">GBPUSD,M15</text>
<text x="322.300" y="836" textLength="63.500" lengthAdjust="spacingAndGlyphs">GBPUSD,M5</text>
<text x="410" y="836" textLength="63.800" lengthAdjust="spacingAndGlyphs">GBPUSD,M5</text>
<text x="496.300" y="836" textLength="62.500" lengthAdjust="spacingAndGlyphs">EURUSD,M5</text>
<text x="582" y="836" textLength="64" lengthAdjust="spacingAndGlyphs">GBPUSD,M5</text>
<text x="669" y="836" textLength="65.500" lengthAdjust="spacingAndGlyphs">AUDUSD,M5</text>
<text x="756" y="836" textLength="67" lengthAdjust="spacingAndGlyphs">USDCAD,M5</text>
<text x="844" y="836" textLength="51.500" lengthAdjust="spacingAndGlyphs">GOLD,M5</text>
<text x="917.800" y="836" textLength="60.600" lengthAdjust="spacingAndGlyphs">USDJPY,M5</text>
<text x="1003" y="836" textLength="63.400" lengthAdjust="spacingAndGlyphs">GBPUSD,M5</text>
<text x="1088" y="836" textLength="62.800" lengthAdjust="spacingAndGlyphs" style="fill:#000">EURUSD,M5</text>
<text x="1174.600" y="836" textLength="63.400" lengthAdjust="spacingAndGlyphs">GBPUSD,M5</text>
<text x="1261" y="836" textLength="66.500" lengthAdjust="spacingAndGlyphs">AUDUSD,M5</text>
<text x="1349" y="836" textLength="66.500" lengthAdjust="spacingAndGlyphs">USDCAD,M5</text>
<text x="1438.600" y="836" textLength="59.900" lengthAdjust="spacingAndGlyphs">USDJPY,M5</text>
<text x="1522" y="836" textLength="63.700" lengthAdjust="spacingAndGlyphs">GBPUSD,M5</text>
</g>
<path d="M1802 827v8l-4-4zM1819 827v8l4-4z" fill="#a0a0a0"/>

<!-- left navigator -->
<rect x="0" y="10" width="120" height="810" fill="#f0f0f0"/>
<rect x="0" y="20" width="100" height="797" fill="#fff"/>
<rect x="0" y="12" width="103" height="9" fill="#dfe7f0"/>
<text x="0" y="20" font-size="11" fill="#333" textLength="33" lengthAdjust="spacingAndGlyphs">0:45:11</text>
<path d="M108 13l5 5M113 13l-5 5" stroke="#222" stroke-width="1.500" fill="none"/>
<rect x="0" y="45" width="5" height="25" fill="#f3fbef"/>
<rect x="0" y="70" width="5" height="20" fill="#3399ff"/>
<rect x="0" y="150" width="5" height="20" fill="#fff6cf"/>
<rect x="0" y="110" width="5" height="1" fill="#ccc"/><rect x="0" y="130" width="5" height="1" fill="#ccc"/><rect x="0" y="190" width="5" height="1" fill="#ccc"/><rect x="0" y="230" width="5" height="1" fill="#ccc"/>
<rect x="0" y="402" width="5" height="1" fill="#222"/><rect x="0" y="407" width="5" height="17" fill="#e8e8e8"/><rect x="0" y="427" width="5" height="15" fill="#b9c9e0"/>
<g font-size="13" fill="#7a1010">
<text x="-2" y="549" fill="#222">i</text><text x="-4" y="567">u</text><text x="-1" y="586">t</text><text x="-3" y="621" fill="#222">fi</text>
<text x="-4" y="638">R</text><text x="-4" y="657">R</text><text x="-4" y="675">R</text><text x="-4" y="693">R</text><text x="-4" y="711">R</text><text x="-2" y="729" fill="#222">-</text>
</g>
<g font-size="13" fill="#111">
<text x="0" y="748" textLength="98" lengthAdjust="spacingAndGlyphs">-End DOT Edition 1</text>
<text x="0" y="766" textLength="100" lengthAdjust="spacingAndGlyphs">икатор каналів-фо</text>
<text x="0" y="784" textLength="63" lengthAdjust="spacingAndGlyphs">алог ЗІг-заг</text>
<text x="0" y="802" textLength="100" lengthAdjust="spacingAndGlyphs">дикатор гармонич</text>
<text x="0" y="820" textLength="45" lengthAdjust="spacingAndGlyphs">ст Харда</text>
</g>
<rect x="0" y="817" width="120" height="23" fill="#f0f0f0"/>
<rect x="0" y="816" width="116" height="1.500" fill="#111"/>
<text x="0" y="831" font-size="13" fill="#555" textLength="48" lengthAdjust="spacingAndGlyphs">бранное</text>
<rect x="58" y="820" width="1" height="14" fill="#888"/>
<rect x="116" y="818" width="4" height="22" fill="#d8d8d8"/>

<!-- dialog -->
<rect x="702" y="17" width="4" height="558" fill="#94c2e8"/>
<rect x="702" y="17" width="1" height="558" fill="#5b7ea0"/>
<rect x="5.500" y="17" width="697" height="726" fill="#8dc6f5" stroke="#6ea8d8" stroke-width="1"/>
<rect x="6" y="18" width="696" height="28" fill="url(#tit)"/>
<rect x="200" y="24" width="300" height="18" rx="9" fill="#fff" opacity=".75" filter="url(#bl)"/>
<text x="212.600" y="38" font-size="15" fill="#222" textLength="281.400" lengthAdjust="spacingAndGlyphs">Custom Indicator - 3-1-Bb macd nrp-mtf alerts</text>
<path d="M626.500 17v15a4 4 0 0 0 4 4h60a4 4 0 0 0 4-4v-15z" fill="url(#cb)" stroke="#3e6a92" stroke-width="1"/>
<text x="634" y="33" font-size="15" font-weight="bold" fill="#fff" stroke="#334" stroke-width=".7">?</text>
<text x="668" y="33" font-size="15" font-weight="bold" fill="#fff" stroke="#334" stroke-width=".7">X</text>
<rect x="12.500" y="46" width="682" height="690" fill="#f0f0f0" stroke="#6b8fae" stroke-width="1"/>

<!-- tabs -->
<rect x="19.500" y="74.500" width="668" height="625" fill="#fff" stroke="#acacac" stroke-width="1"/>
<g fill="#f0f0f0" stroke="#bdbdbd" stroke-width="1">
<rect x="21.500" y="56.500" width="79" height="18"/>
<rect x="101.500" y="56.500" width="44.500" height="18"/>
<rect x="266" y="56.500" width="41" height="18"/>
<rect x="308" y="56.500" width="49" height="18"/>
<rect x="357.700" y="56.500" width="77.600" height="18"/>
</g>
<path d="M146.500 75V54.500H265.500V75" fill="#fff" stroke="#bdbdbd" stroke-width="1"/>
<rect x="147" y="73" width="118" height="3" fill="#fff"/>
<g class="t">
<text x="26.600" y="70" textLength="68" lengthAdjust="spacingAndGlyphs">О программе</text>
<text x="106.500" y="70" textLength="35" lengthAdjust="spacingAndGlyphs">Общие</text>
<text x="154.300" y="68" textLength="103.700" lengthAdjust="spacingAndGlyphs">Входные параметры</text>
<text x="270" y="70" textLength="30" lengthAdjust="spacingAndGlyphs">Цвета</text>
<text x="313" y="70" textLength="37.300" lengthAdjust="spacingAndGlyphs">Уровни</text>
<text x="362.700" y="70" textLength="69" lengthAdjust="spacingAndGlyphs">Отображение</text>
</g>

<!-- list view -->
<rect x="31.700" y="85" width="533.800" height="604" fill="#fff" stroke="#828790" stroke-width="1.500"/>
<rect x="33" y="86" width="531" height="22.500" fill="url(#hdr)"/>
<rect x="297" y="86" width="1" height="23" fill="#fff"/>
<g fill="#ebebeb">
<rect x="33" y="130" width="531" height="19"/><rect x="33" y="170" width="531" height="19"/><rect x="33" y="210" width="531" height="19"/><rect x="33" y="250" width="531" height="19"/><rect x="33" y="290" width="531" height="19"/><rect x="33" y="330" width="531" height="19"/><rect x="33" y="370" width="531" height="19"/><rect x="33" y="410" width="531" height="19"/>
</g>
<path class="n" stroke="#c9c9c9" stroke-width="1.200" d="M33 129.400H564M33 149.400H564M33 169.400H564M33 189.400H564M33 209.400H564M33 229.400H564M33 249.400H564M33 269.400H564M33 289.400H564M33 309.400H564M33 329.400H564M33 349.400H564M33 369.400H564M33 389.400H564M33 409.400H564M33 429.400H564"/>
<rect x="297" y="110" width="1" height="320" fill="#d0d0d0"/>
<g class="t">
<text x="39" y="102" style="fill:#333" textLength="63" lengthAdjust="spacingAndGlyphs">Переменная</text>
<text x="304" y="102" style="fill:#333" textLength="47" lengthAdjust="spacingAndGlyphs">Значение</text>
<text x="54.200" y="124.500" textLength="51.400" lengthAdjust="spacingAndGlyphs">TimeFrame</text>
<text x="54.200" y="144.500" textLength="36.700" lengthAdjust="spacingAndGlyphs">FastLen</text>
<text x="54.200" y="164.500" textLength="40" lengthAdjust="spacingAndGlyphs">SlowLen</text>
<text x="54.200" y="184.500" textLength="32" lengthAdjust="spacingAndGlyphs">Length</text>
<text x="54.200" y="204.500" textLength="23" lengthAdjust="spacingAndGlyphs">StDv</text>
<text x="53.700" y="224.500" textLength="44.500" lengthAdjust="spacingAndGlyphs">drawDots</text>
<text x="53.700" y="244.500" textLength="60" lengthAdjust="spacingAndGlyphs">arrowsVisible</text>
<text x="53.700" y="264.500" textLength="71" lengthAdjust="spacingAndGlyphs">arrowsIdentifier</text>
<text x="53.700" y="284.500" textLength="69.300" lengthAdjust="spacingAndGlyphs">arrowsUpColor</text>
<text x="53.700" y="304.500" textLength="69.300" lengthAdjust="spacingAndGlyphs">arrowsDnColor</text>
<text x="53.700" y="324.500" textLength="38" lengthAdjust="spacingAndGlyphs">alertsOn</text>
<text x="53.700" y="344.500" textLength="72" lengthAdjust="spacingAndGlyphs">alertsOnCurrent</text>
<text x="53.700" y="364.500" textLength="68" lengthAdjust="spacingAndGlyphs">alertsMessage</text>
<text x="53.700" y="384.500" textLength="55.600" lengthAdjust="spacingAndGlyphs">alertsSound</text>
<text x="53.700" y="404.500" textLength="49.600" lengthAdjust="spacingAndGlyphs">alertsEmail</text>
<text x="54.200" y="424.500" textLength="49" lengthAdjust="spacingAndGlyphs">Interpolate</text>
<text x="300.700" y="124.500" textLength="13.800" lengthAdjust="spacingAndGlyphs">H1</text>
<text x="300.700" y="144.500" textLength="12.400" lengthAdjust="spacingAndGlyphs">12</text>
<text x="300.700" y="164.500" textLength="12.400" lengthAdjust="spacingAndGlyphs">26</text>
<text x="300.700" y="184.500" textLength="12.400" lengthAdjust="spacingAndGlyphs">10</text>
<text x="300.700" y="204.500" textLength="14.700" lengthAdjust="spacingAndGlyphs">1.1</text>
<text x="300" y="224.500" textLength="22.500" lengthAdjust="spacingAndGlyphs">false</text>
<text x="300" y="244.500" textLength="18.800" lengthAdjust="spacingAndGlyphs">true</text>
<text x="300.300" y="264.500" textLength="75.300" lengthAdjust="spacingAndGlyphs">bb macd arrows</text>
<text x="317.300" y="284.500" textLength="64.300" lengthAdjust="spacingAndGlyphs">DeepSkyBlue</text>
<text x="317.300" y="304.500" textLength="19.300" lengthAdjust="spacingAndGlyphs">Red</text>
<text x="300" y="324.500" textLength="22.500" lengthAdjust="spacingAndGlyphs">false</text>
<text x="300" y="344.500" textLength="22.500" lengthAdjust="spacingAndGlyphs">false</text>
<text x="300" y="364.500" textLength="22.500" lengthAdjust="spacingAndGlyphs">false</text>
<text x="300" y="384.500" textLength="22.500" lengthAdjust="spacingAndGlyphs">false</text>
<text x="300" y="404.500" textLength="22.500" lengthAdjust="spacingAndGlyphs">false</text>
<text x="300" y="424.500" textLength="18.800" lengthAdjust="spacingAndGlyphs">true</text>
</g>
<rect x="301.200" y="273" width="12.800" height="13" fill="#00bfff" stroke="#ccc" stroke-width=".5"/>
<rect x="301.200" y="293" width="12.800" height="13" fill="#f00" stroke="#ccc" stroke-width=".5"/>

<!-- row icons -->
<g style="font-size:8px">
<g transform="translate(34.500,112)"><path fill="#f0e08e" stroke="#b59a3c" d="M.5.5H11.500L14.500 3.500V14l-2 1.500-2-1.500-2 1.500-2-1.500-2 1.500-2-1.500-2 1.500Z"/><text x="3" y="10" fill="#555">ab</text></g>
<g transform="translate(34.500,132)"><path fill="#a9cdf0" stroke="#3f7db8" d="M.5.5H11.500L14.500 3.500V14l-2 1.500-2-1.500-2 1.500-2-1.500-2 1.500-2-1.500-2 1.500Z"/><text x="2.500" y="10" fill="#245" style="font-size:6px">123</text></g>
<g transform="translate(34.500,152)"><path fill="#a9cdf0" stroke="#3f7db8" d="M.5.5H11.500L14.500 3.500V14l-2 1.500-2-1.500-2 1.500-2-1.500-2 1.500-2-1.500-2 1.500Z"/><text x="2.500" y="10" fill="#245" style="font-size:6px">123</text></g>
<g transform="translate(34.500,172)"><path fill="#a9cdf0" stroke="#3f7db8" d="M.5.5H11.500L14.500 3.500V14l-2 1.500-2-1.500-2 1.500-2-1.500-2 1.500-2-1.500-2 1.500Z"/><text x="2.500" y="10" fill="#245" style="font-size:6px">123</text></g>
<g transform="translate(34.500,192)"><path fill="#a6e6e6" stroke="#3aa9a9" d="M.5.5H11.500L14.500 3.500V14l-2 1.500-2-1.500-2 1.500-2-1.500-2 1.500-2-1.500-2 1.500Z"/><text x="3" y="10" fill="#245" style="font-size:7px">½</text></g>
<g transform="translate(34.500,212)"><path fill="#8ee08e" stroke="#25b025" d="M.5.5H11.500L14.500 3.500V14l-2 1.500-2-1.500-2 1.500-2-1.500-2 1.500-2-1.500-2 1.500Z"/><path d="M3 10L6.500 6 8.500 8M9.500 9H12.500" fill="none" stroke="#0a6a0a" stroke-width="1.200"/></g>
<g transform="translate(34.500,232)"><path fill="#8ee08e" stroke="#25b025" d="M.5.5H11.500L14.500 3.500V14l-2 1.500-2-1.500-2 1.500-2-1.500-2 1.500-2-1.500-2 1.500Z"/><path d="M3 10L6.500 6 8.500 8M9.500 9H12.500" fill="none" stroke="#0a6a0a" stroke-width="1.200"/></g>
<g transform="translate(34.500,252)"><path fill="#f0e08e" stroke="#b59a3c" d="M.5.5H11.500L14.500 3.500V14l-2 1.500-2-1.500-2 1.500-2-1.500-2 1.500-2-1.500-2 1.500Z"/><text x="3" y="10" fill="#555">ab</text></g>
<g transform="translate(34.500,272)"><path fill="#f8f8f8" stroke="#888" d="M.5.5H11.500L14.500 3.500V14l-2 1.500-2-1.500-2 1.500-2-1.500-2 1.500-2-1.500-2 1.500Z"/><rect x="3" y="5" width="9" height="6" fill="#ff8c00"/><rect x="5" y="6.500" width="5" height="3" fill="#ffe040"/></g>
<g transform="translate(34.500,292)"><path fill="#f8f8f8" stroke="#888" d="M.5.5H11.500L14.500 3.500V14l-2 1.500-2-1.500-2 1.500-2-1.500-2 1.500-2-1.500-2 1.500Z"/><rect x="3" y="5" width="9" height="6" fill="#ff8c00"/><rect x="5" y="6.500" width="5" height="3" fill="#ffe040"/></g>
<g transform="translate(34.500,312)"><path fill="#8ee08e" stroke="#25b025" d="M.5.5H11.500L14.500 3.500V14l-2 1.500-2-1.500-2 1.500-2-1.500-2 1.500-2-1.500-2 1.500Z"/><path d="M3 10L6.500 6 8.500 8M9.500 9H12.500" fill="none" stroke="#0a6a0a" stroke-width="1.200"/></g>
<g transform="translate(34.500,332)"><path fill="#8ee08e" stroke="#25b025" d="M.5.5H11.500L14.500 3.500V14l-2 1.500-2-1.500-2 1.500-2-1.500-2 1.500-2-1.500-2 1.500Z"/><path d="M3 10L6.500 6 8.500 8M9.500 9H12.500" fill="none" stroke="#0a6a0a" stroke-width="1.200"/></g>
<g transform="translate(34.500,352)"><path fill="#8ee08e" stroke="#25b025" d="M.5.5H11.500L14.500 3.500V14l-2 1.500-2-1.500-2 1.500-2-1.500-2 1.500-2-1.500-2 1.500Z"/><path d="M3 10L6.500 6 8.500 8M9.500 9H12.500" fill="none" stroke="#0a6a0a" stroke-width="1.200"/></g>
<g transform="translate(34.500,372)"><path fill="#8ee08e" stroke="#25b025" d="M.5.5H11.500L14.500 3.500V14l-2 1.500-2-1.500-2 1.500-2-1.500-2 1.500-2-1.500-2 1.500Z"/><path d="M3 10L6.500 6 8.500 8M9.500 9H12.500" fill="none" stroke="#0a6a0a" stroke-width="1.200"/></g>
<g transform="translate(34.500,392)"><path fill="#8ee08e" stroke="#25b025" d="M.5.5H11.500L14.500 3.500V14l-2 1.500-2-1.500-2 1.500-2-1.500-2 1.500-2-1.500-2 1.500Z"/><path d="M3 10L6.500 6 8.500 8M9.500 9H12.500" fill="none" stroke="#0a6a0a" stroke-width="1.200"/></g>
<g transform="translate(34.500,412)"><path fill="#8ee08e" stroke="#25b025" d="M.5.5H11.500L14.500 3.500V14l-2 1.500-2-1.500-2 1.500-2-1.500-2 1.500-2-1.500-2 1.500Z"/><path d="M3 10L6.500 6 8.500 8M9.500 9H12.500" fill="none" stroke="#0a6a0a" stroke-width="1.200"/></g>
</g>

<!-- buttons -->
<g fill="url(#btn)" stroke="#b4b4b4" stroke-width="1">
<rect x="574.500" y="633.500" width="102" height="22" rx="2"/>
<rect x="574.500" y="666.500" width="102" height="22" rx="2"/>
<rect x="450.500" y="705.500" width="72" height="22" rx="2"/>
<rect x="531.500" y="705.500" width="72" height="22" rx="2"/>
<rect x="612.500" y="705.500" width="72" height="22" rx="2"/>
</g>
<g class="t">
<text x="599.200" y="649" textLength="51" lengthAdjust="spacingAndGlyphs">Загрузить</text>
<text x="598.300" y="682" textLength="52.800" lengthAdjust="spacingAndGlyphs">Сохранить</text>
<text x="478.400" y="721" textLength="16.100" lengthAdjust="spacingAndGlyphs">OK</text>
<text x="547.300" y="721" textLength="39" lengthAdjust="spacingAndGlyphs">Отмена</text>
<text x="632.700" y="721" textLength="30.700" lengthAdjust="spacingAndGlyphs">Сброс</text>
</g>
<path d="M691 727l-7 6M691 729.500l-4.500 3.500M691 732l-2 1.500" stroke="#777" stroke-width="1" fill="none"/>
</svg>
</body></html>
